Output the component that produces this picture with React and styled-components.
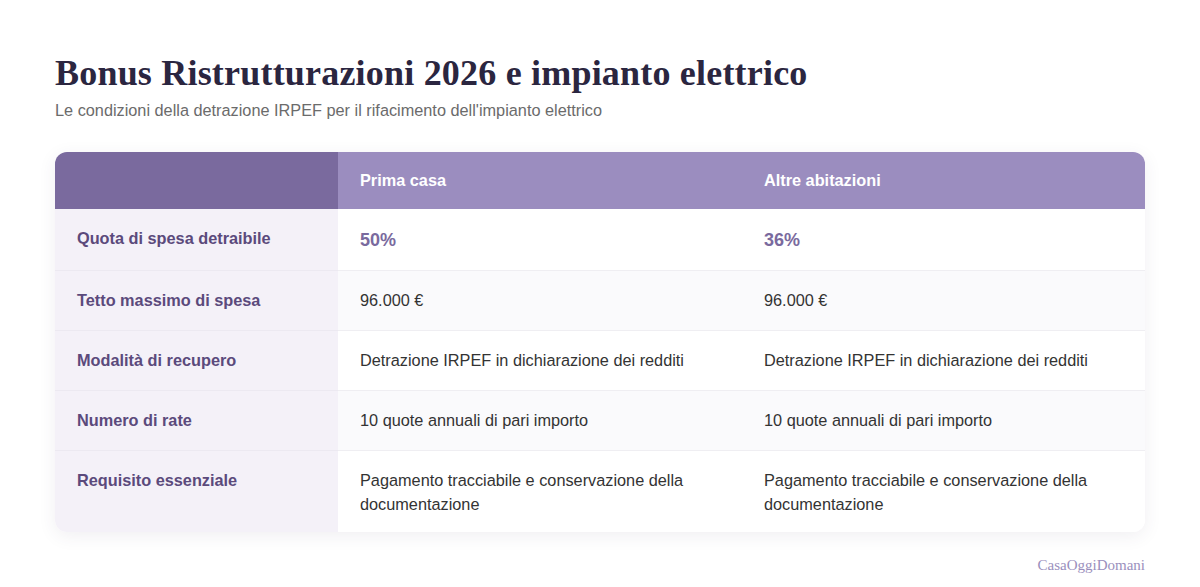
import React from "react";
import styled, { createGlobalStyle } from "styled-components";

const Global = createGlobalStyle`
  html, body { margin: 0; padding: 0; background: #ffffff; }
  body { font-family: "Liberation Sans", Arial, sans-serif; }
`;

const Page = styled.div`
  width: 1200px;
  height: 587px;
  box-sizing: border-box;
  padding: 54px 55px 0 55px;
  display: flex;
  flex-direction: column;
`;

const Title = styled.h1`
  margin: 0;
  font-family: "Liberation Serif", "Times New Roman", serif;
  font-weight: 700;
  font-size: 36px;
  line-height: 38px;
  color: #2b2640;
  letter-spacing: 0.2px;
`;

const Subtitle = styled.p`
  margin: 8px 0 0 0;
  font-size: 16.3px;
  line-height: 20px;
  color: #6b6b6b;
`;

const Card = styled.div`
  margin-top: 32px;
  border-radius: 12px;
  overflow: hidden;
  box-shadow: 0 4px 18px rgba(60, 50, 90, 0.08);
  display: grid;
  grid-template-columns: 283px 404px 1fr;
`;

const HeadCell = styled.div`
  background: ${(p) => (p.$dark ? "#7a6a9e" : "#9b8dbf")};
  color: #ffffff;
  font-weight: 700;
  font-size: 16.3px;
  height: 57px;
  display: flex;
  align-items: center;
  padding: 0 22px;
`;

const LabelCell = styled.div`
  background: #f4f1f8;
  color: #5b4a7c;
  font-weight: 700;
  font-size: 16.3px;
  line-height: 24px;
  padding: ${(p) => (p.$big ? "17px 22px 20px" : p.$last ? "17px 22px 16px" : "17px 22px 18px")};
  border-bottom: ${(p) => (p.$last ? "none" : "1px solid #ece9f1")};
`;

const ValueCell = styled.div`
  background: ${(p) => (p.$alt ? "#fafafc" : "#ffffff")};
  color: ${(p) => (p.$pct ? "#7a6a9e" : "#333333")};
  font-weight: ${(p) => (p.$pct ? 700 : 400)};
  font-size: ${(p) => (p.$pct ? "18px" : "16.3px")};
  line-height: 24px;
  padding: ${(p) => (p.$pct ? "19px 22px 18px" : p.$last ? "17px 22px 16px" : "17px 22px 18px")};
  border-bottom: ${(p) => (p.$last ? "none" : "1px solid #efeef2")};
`;

const Footer = styled.div`
  margin-top: 24px;
  text-align: right;
  font-family: "Liberation Serif", "Times New Roman", serif;
  font-size: 15px;
  line-height: 18px;
  color: #9a8fbd;
`;

const rows = [
  { label: "Quota di spesa detraibile", a: "50%", b: "36%", pct: true },
  { label: "Tetto massimo di spesa", a: "96.000 €", b: "96.000 €" },
  {
    label: "Modalità di recupero",
    a: "Detrazione IRPEF in dichiarazione dei redditi",
    b: "Detrazione IRPEF in dichiarazione dei redditi",
  },
  {
    label: "Numero di rate",
    a: "10 quote annuali di pari importo",
    b: "10 quote annuali di pari importo",
  },
  {
    label: "Requisito essenziale",
    a: "Pagamento tracciabile e conservazione della documentazione",
    b: "Pagamento tracciabile e conservazione della documentazione",
  },
];

export default function App() {
  return (
    <>
      <Global />
      <Page>
        <Title>Bonus Ristrutturazioni 2026 e impianto elettrico</Title>
        <Subtitle>
          Le condizioni della detrazione IRPEF per il rifacimento dell'impianto elettrico
        </Subtitle>
        <Card>
          <HeadCell $dark />
          <HeadCell>Prima casa</HeadCell>
          <HeadCell>Altre abitazioni</HeadCell>
          {rows.map((r, i) => {
            const last = i === rows.length - 1;
            const alt = i % 2 === 1;
            return (
              <React.Fragment key={r.label}>
                <LabelCell $last={last} $big={r.pct}>{r.label}</LabelCell>
                <ValueCell $last={last} $alt={alt} $pct={r.pct}>{r.a}</ValueCell>
                <ValueCell $last={last} $alt={alt} $pct={r.pct}>{r.b}</ValueCell>
              </React.Fragment>
            );
          })}
        </Card>
        <Footer>CasaOggiDomani</Footer>
      </Page>
    </>
  );
}
